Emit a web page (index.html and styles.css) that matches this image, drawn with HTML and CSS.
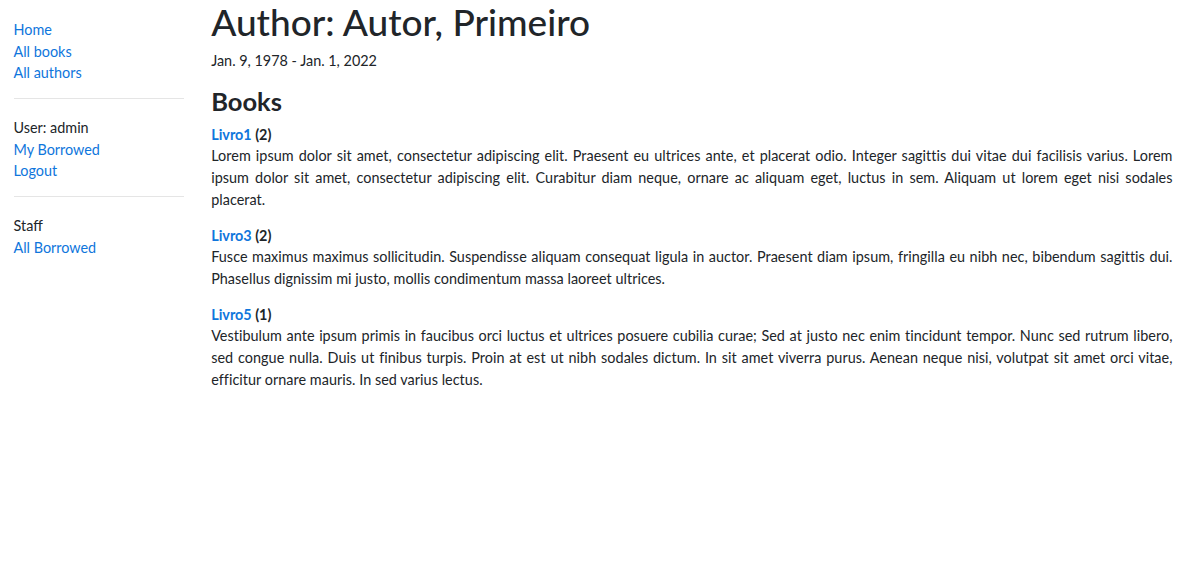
FILE: index.html
```html
<!DOCTYPE html>
<html lang="en">
<head>
<meta charset="utf-8">
<title>Local Library</title>
<link rel="stylesheet" href="styles.css">
</head>
<body>
<div class="container-fluid">
  <div class="row">
    <div class="sidebar">
      <ul class="sidebar-nav">
        <li><a href="#">Home</a></li>
        <li><a href="#">All books</a></li>
        <li><a href="#">All authors</a></li>
      </ul>
      <hr>
      <ul class="sidebar-nav">
        <li>User: admin</li>
        <li><a href="#">My Borrowed</a></li>
        <li><a href="#">Logout</a></li>
      </ul>
      <hr>
      <ul class="sidebar-nav">
        <li>Staff</li>
        <li><a href="#">All Borrowed</a></li>
      </ul>
    </div>
    <div class="main">
      <h1 class="title">Author: Autor, Primeiro</h1>
      <p class="dates">Jan. 9, 1978 - Jan. 1, 2022</p>
      <h3 class="section">Books</h3>
      <dl class="books">
        <dt><a href="#">Livro1</a> (2)</dt>
        <dd>Lorem ipsum dolor sit amet, consectetur adipiscing elit. Praesent eu ultrices ante, et placerat odio. Integer sagittis dui vitae dui facilisis varius. Lorem ipsum dolor sit amet, consectetur adipiscing elit. Curabitur diam neque, ornare ac aliquam eget, luctus in sem. Aliquam ut lorem eget nisi sodales placerat.</dd>
        <dt><a href="#">Livro3</a> (2)</dt>
        <dd>Fusce maximus maximus sollicitudin. Suspendisse aliquam consequat ligula in auctor. Praesent diam ipsum, fringilla eu nibh nec, bibendum sagittis dui. Phasellus dignissim mi justo, mollis condimentum massa laoreet ultrices.</dd>
        <dt><a href="#">Livro5</a> (1)</dt>
        <dd>Vestibulum ante ipsum primis in faucibus orci luctus et ultrices posuere cubilia curae; Sed at justo nec enim tincidunt tempor. Nunc sed rutrum libero, sed congue nulla. Duis ut finibus turpis. Proin at est ut nibh sodales dictum. In sit amet viverra purus. Aenean neque nisi, volutpat sit amet orci vitae, efficitur ornare mauris. In sed varius lectus.</dd>
      </dl>
    </div>
  </div>
</div>
</body>
</html>
```
FILE: styles.css
```css
body {
  margin: 0;
  padding-top: 1px;
  font-family: Lato, "Liberation Sans", sans-serif;
  font-size: 14.4px;
  line-height: 21.6px;
  color: #212529;
  background: #fff;
}
a {
  color: #0f76dc;
  text-decoration: none;
}
.container-fluid {
  padding: 0 13.5px;
}
.row {
  display: flex;
  margin: 0 -13.5px;
}
.sidebar {
  flex: 0 0 16.6667%;
  max-width: 16.6667%;
  padding: 0 13.5px;
  box-sizing: border-box;
}
.main {
  flex: 0 0 83.3333%;
  max-width: 83.3333%;
  padding: 0 13.5px;
  box-sizing: border-box;
}
.sidebar-nav {
  list-style: none;
  padding: 0;
  margin: 18px 0 14.4px;
}
hr {
  margin: 14.4px 0;
  border: 0;
  border-top: 1px solid rgba(0, 0, 0, 0.1);
  height: 0;
}
.title {
  font-size: 37px;
  line-height: 43.2px;
  font-weight: 500;
  margin: -1px 0 7.2px;
}
.dates {
  margin: 0 0 14.4px;
}
.section {
  font-size: 25.5px;
  line-height: 30.24px;
  font-weight: 700;
  margin: 1px 0 7.2px;
}
.books {
  margin: 0;
}
.books dt {
  font-weight: 700;
}
.books dd {
  margin: 0 0 14.4px;
  text-align: justify;
  letter-spacing: 0.04px;
}
```
